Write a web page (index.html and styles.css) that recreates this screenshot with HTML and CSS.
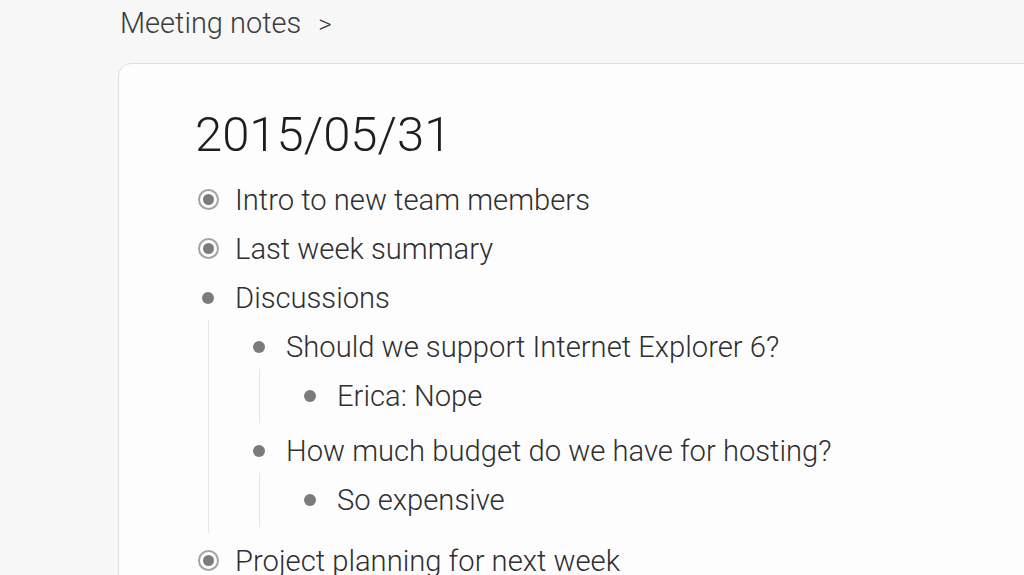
FILE: index.html
```html
<!DOCTYPE html>
<html>
<head>
<meta charset="utf-8">
<link rel="stylesheet" href="styles.css">
</head>
<body>
<div class="crumbs"><span>Meeting notes</span><span class="sep">&gt;</span></div>
<div class="card">
  <h1 class="title">2015/05/31</h1>
  <div class="list">
    <div class="item">
      <div class="row"><span class="bullet collapsed"><i></i></span><span class="text">Intro to new team members</span></div>
    </div>
    <div class="item">
      <div class="row"><span class="bullet collapsed"><i></i></span><span class="text">Last week summary</span></div>
    </div>
    <div class="item">
      <div class="row"><span class="bullet"><i></i></span><span class="text">Discussions</span></div>
      <div class="children">
        <div class="item">
          <div class="row"><span class="bullet"><i></i></span><span class="text">Should we support Internet Explorer 6?</span></div>
          <div class="children">
            <div class="item">
              <div class="row"><span class="bullet"><i></i></span><span class="text">Erica: Nope</span></div>
            </div>
          </div>
        </div>
        <div class="item">
          <div class="row"><span class="bullet"><i></i></span><span class="text">How much budget do we have for hosting?</span></div>
          <div class="children">
            <div class="item">
              <div class="row"><span class="bullet"><i></i></span><span class="text">So expensive</span></div>
            </div>
          </div>
        </div>
      </div>
    </div>
    <div class="item">
      <div class="row"><span class="bullet collapsed"><i></i></span><span class="text">Project planning for next week</span></div>
    </div>
  </div>
</div>
</body>
</html>
```

FILE: styles.css
```css
html, body {
  margin: 0;
  padding: 0;
  height: 100%;
  overflow: hidden;
}
body {
  background: #f7f7f7;
  font-family: Roboto, "Liberation Sans", sans-serif;
  font-weight: 300;
  color: #2f2f2f;
}
.crumbs {
  padding: 6px 0 0 120px;
  font-size: 29px;
  line-height: 34px;
  color: #3c3c3c;
  height: 54px;
  box-sizing: border-box;
}
.crumbs .sep {
  margin-left: 17px;
  font-size: 26px;
}
.card {
  margin-left: 118px;
  margin-top: 9px;
  width: 1000px;
  height: 700px;
  background: #fdfdfe;
  border: 1px solid #dedede;
  border-radius: 13px;
  padding: 40px 0 0 76px;
  box-sizing: border-box;
}
.title {
  margin: 0 0 10px;
  font-size: 49px;
  font-weight: 300;
  line-height: 61px;
  color: #1e1e1e;
}
.row {
  display: flex;
  align-items: center;
  height: 49px;
}
.bullet {
  width: 26px;
  height: 26px;
  margin-right: 14px;
  display: flex;
  align-items: center;
  justify-content: center;
  flex: none;
}
.bullet i {
  display: block;
  width: 12px;
  height: 12px;
  border-radius: 50%;
  background: #7b7b7e;
}
.bullet.collapsed i {
  width: 11px;
  height: 11px;
  box-shadow: 0 0 0 3px #fdfdfe, 0 0 0 5px #a2a2a4;
}
.text {
  font-size: 29.2px;
  white-space: nowrap;
}
.children {
  margin: -2.5px 0 3.5px 13px;
  padding: 2.5px 0 2.5px 37px;
  border-left: 1px solid #e6e6e6;
}
```
